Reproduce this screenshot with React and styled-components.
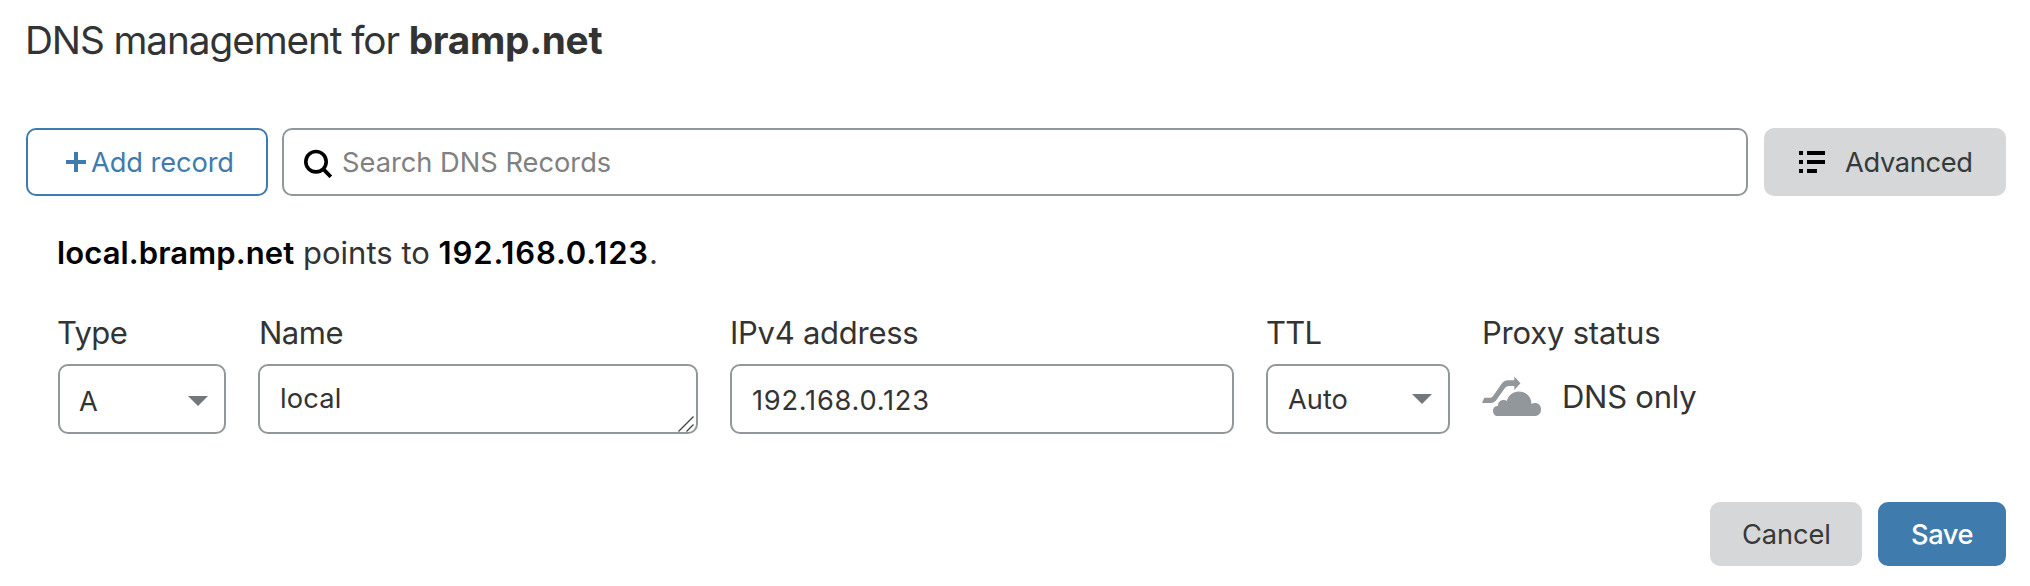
import React from "react";
import styled, { createGlobalStyle } from "styled-components";

const Global = createGlobalStyle`
  *, *::before, *::after { box-sizing: border-box; }
  body { margin: 0; background: #fff; color: #333; font-family: Inter, "Liberation Sans", sans-serif; }
  svg { display: block; flex: none; }
`;

const Page = styled.main`
  height: 586px;
  padding: 16px 24px 0 26px;
  display: flex;
  flex-direction: column;
  white-space: nowrap;
`;

const Title = styled.h1`
  margin: 0 0 64px -1px;
  font-size: 38.75px;
  line-height: 48px;
  font-weight: 400;
  letter-spacing: -1.1px;
  color: #333;
  strong {
    font-weight: 700;
    letter-spacing: -0.3px;
  }
`;

const Toolbar = styled.div`
  display: flex;
  height: 68px;
`;

const Button = styled.button`
  display: flex;
  align-items: center;
  width: ${(p) => p.$width}px;
  height: ${(p) => p.$height || 68}px;
  padding: 0 0 0 ${(p) => p.$inset}px;
  border: ${(p) => (p.$kind === "outline" ? "2px solid #3f7bae" : "0")};
  border-radius: 10px;
  background: ${(p) => ({ outline: "#fff", neutral: "#d5d7d8", primary: "#407bad" })[p.$kind]};
  color: ${(p) => ({ outline: "#3f7bae", neutral: "#36393a", primary: "#fff" })[p.$kind]};
  font-family: inherit;
  font-size: 27.25px;
  line-height: 36px;
  font-weight: ${(p) => (p.$kind === "primary" ? 500 : 400)};
  letter-spacing: ${(p) => p.$tracking || 0}px;
`;

const ButtonText = styled.span`
  margin-left: ${(p) => p.$gap || 0}px;
  padding-top: 2px;
`;

const SearchBox = styled.div`
  flex: 1;
  display: flex;
  align-items: center;
  gap: 9px;
  margin: 0 16px 0 14px;
  padding-left: 20px;
  border: 2px solid #92979b;
  border-radius: 10px;
  font-size: 27.25px;
  line-height: 36px;
  color: #808080;
`;

const Form = styled.section`
  padding: 37px 0 0 32px;
`;

const Summary = styled.p`
  margin: 0 0 40px -1px;
  font-size: 31px;
  line-height: 40px;
  letter-spacing: 0.02px;
  color: #333;
`;

const Strong = styled.strong`
  font-weight: 600;
  color: #000;
  letter-spacing: ${(p) => p.$tracking}px;
`;

const Fields = styled.div`
  display: flex;
  gap: 32px;
`;

const Field = styled.div`
  width: ${(p) => p.$width}px;
`;

const Label = styled.div`
  margin: 0 0 11px ${(p) => p.$shift || 0}px;
  font-size: 31px;
  line-height: 40px;
  letter-spacing: ${(p) => p.$tracking}px;
`;

const Control = styled.div`
  display: flex;
  align-items: center;
  justify-content: space-between;
  position: relative;
  height: 70px;
  padding: 0 16px 0 ${(p) => p.$inset}px;
  border: 2px solid #92979b;
  border-radius: 10px;
  font-size: 27.25px;
  letter-spacing: ${(p) => p.$tracking || 0}px;
`;

const Value = styled.span`
  line-height: 36px;
  padding-top: ${(p) => p.$down || 0}px;
  padding-bottom: ${(p) => p.$up || 0}px;
`;

const CaretSlot = styled.span`
  padding-top: ${(p) => p.$down || 0}px;
`;

const Grip = styled.svg`
  position: absolute;
  right: 2px;
  bottom: 0;
`;

const Status = styled.div`
  display: flex;
  align-items: center;
  gap: 20px;
  height: 65px;
  font-size: 31px;
  line-height: 40px;
  letter-spacing: -0.25px;
`;

const Footer = styled.footer`
  display: flex;
  justify-content: flex-end;
  gap: 16px;
  margin-top: 68px;
`;

const PlusIcon = () => (
  <svg width="20" height="20" viewBox="0 0 20 20">
    <path d="M0 10H20M10 0V20" stroke="#3f7bae" strokeWidth="4" />
  </svg>
);

const SearchIcon = () => (
  <svg width="29" height="32" viewBox="0 -4 29 32">
    <circle cx="12" cy="11.7" r="10.2" fill="none" stroke="#000" strokeWidth="3.6" />
    <path d="M18.8 18.6L26.8 26.8" stroke="#000" strokeWidth="3.8" />
  </svg>
);

const ListIcon = () => (
  <svg width="26" height="22" viewBox="0 0 26 22" fill="#000">
    <path d="M0 0h4v4H0zM8 0h18v4H8zM0 9h4v4H0zM8 9h18v4H8zM0 18h4v4H0zM8 18h10v4H8z" />
  </svg>
);

const Caret = ({ down }) => (
  <CaretSlot $down={down}>
    <svg width="20" height="10" viewBox="0 0 20 10">
      <path d="M0 0H20L10 10Z" fill="#72777b" />
    </svg>
  </CaretSlot>
);

const CloudIcon = () => (
  <svg width="60" height="41" viewBox="0 0 60 41" fill="#92979b">
    <path d="M0 27L2.3 21.7H7.6C9.4 21.7 10.3 21 11.5 19.4L18.6 9.2C21.2 5.6 23.3 4.3 27 4.3H32.3V.6L38.5 7.3L32.3 14V10H27C24.9 10 23.8 10.8 22.4 12.7L15.3 22.8C13.1 26 11.6 27 8.6 27Z" />
    <path d="M15.8 40C12.9 40 11 37.9 11 35C11 32 13 29.9 16 29.8C15.9 26.4 18.3 24 21.4 24C22.8 24 23.9 24.3 24.9 25.1C26 19.5 31 15.6 37 15.6C44 15.6 49.3 20.7 49.5 27.9C50.6 27.3 51.7 27.1 53 27.1C56.6 27.1 59 29.8 59 33.4C59 37.2 56.4 40 52.7 40Z" />
  </svg>
);

export default function App() {
  return (
    <Page>
      <Global />
      <Title>DNS management for <strong>bramp.net</strong></Title>
      <Toolbar>
        <Button $kind="outline" $width={242} $inset={38} $tracking={-0.1}>
          <PlusIcon />
          <ButtonText $gap={5}>Add record</ButtonText>
        </Button>
        <SearchBox>
          <SearchIcon />
          <Value $down={2}>Search DNS Records</Value>
        </SearchBox>
        <Button $kind="neutral" $width={242} $inset={35} $tracking={-0.35}>
          <ListIcon />
          <ButtonText $gap={20}>Advanced</ButtonText>
        </Button>
      </Toolbar>
      <Form>
        <Summary>
          <Strong $tracking={0.1}>local.bramp.net</Strong> points to <Strong $tracking={0.84}>192.168.0.123</Strong>.
        </Summary>
        <Fields>
          <Field $width={168}>
            <Label $tracking={-0.6} $shift={-1}>Type</Label>
            <Control $inset={19}>
              <Value $down={5}>A</Value>
              <Caret down={3} />
            </Control>
          </Field>
          <Field $width={440}>
            <Label $tracking={-0.5} $shift={1}>Name</Label>
            <Control $inset={20} $tracking={0.2}>
              <Value $up={1}>local</Value>
              <Grip width="16" height="16" viewBox="0 0 16 16">
                <path d="M.5 15.5L15.5 .5M8.5 15.5L15.5 8.5" stroke="#444" strokeWidth="1.4" />
              </Grip>
            </Control>
          </Field>
          <Field $width={504}>
            <Label $tracking={-0.27}>IPv4 address</Label>
            <Control $inset={20} $tracking={0.75}>
              <Value $down={3}>192.168.0.123</Value>
            </Control>
          </Field>
          <Field $width={184}>
            <Label $tracking={-0.8}>TTL</Label>
            <Control $inset={20}>
              <Value $down={1}>Auto</Value>
              <Caret />
            </Control>
          </Field>
          <Field $width={260}>
            <Label $tracking={-0.2}>Proxy status</Label>
            <Status>
              <CloudIcon />
              <span>DNS only</span>
            </Status>
          </Field>
        </Fields>
      </Form>
      <Footer>
        <Button $kind="neutral" $width={152} $height={64} $inset={32} $tracking={-0.1}>
          <ButtonText>Cancel</ButtonText>
        </Button>
        <Button $kind="primary" $width={128} $height={64} $inset={33} $tracking={-0.4}>
          <ButtonText>Save</ButtonText>
        </Button>
      </Footer>
    </Page>
  );
}
